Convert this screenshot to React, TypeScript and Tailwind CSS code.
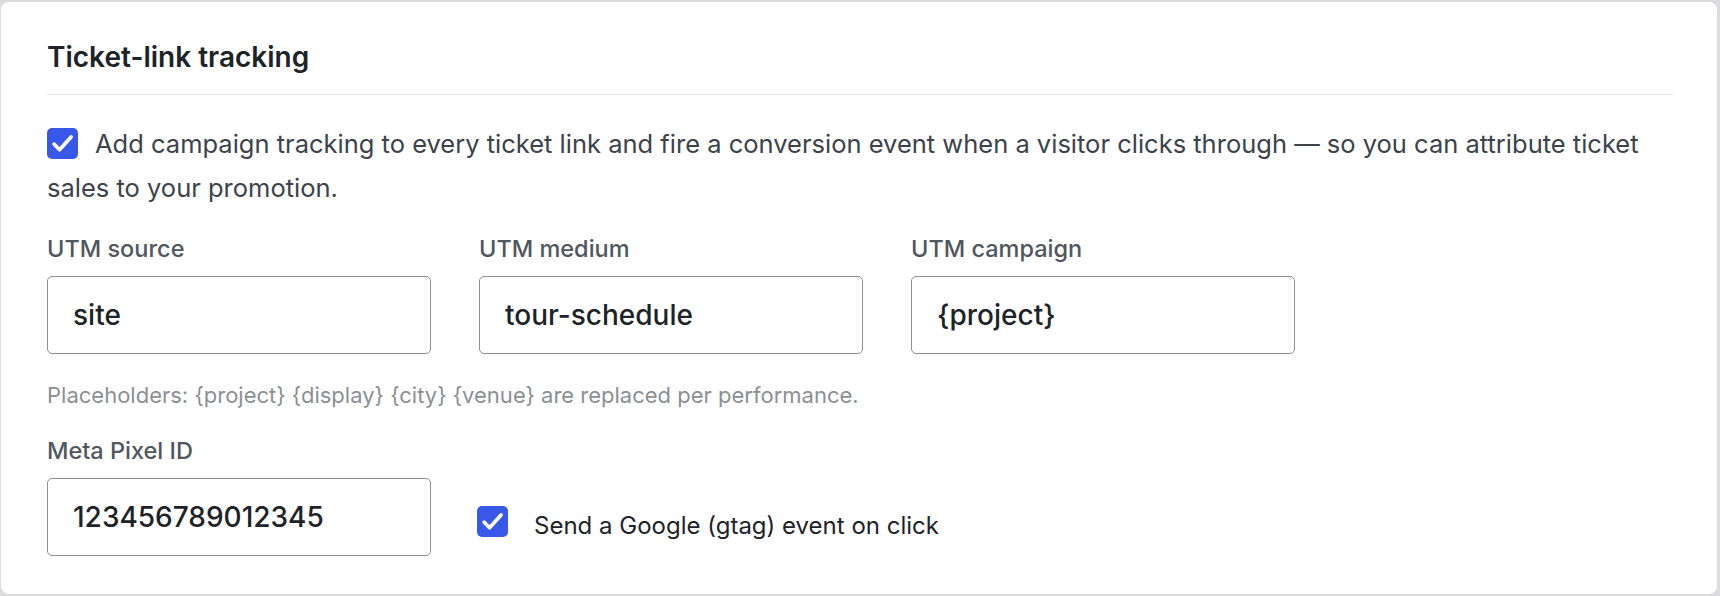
import React from "react"

const font = { fontFamily: "Inter, 'Noto Sans', sans-serif" }

function Check({ className = "" }: { className?: string }) {
  return (
    <span
      className={`inline-flex h-[31px] w-[31px] shrink-0 items-center justify-center rounded-[5px] bg-[#3858e9] align-middle ${className}`}
    >
      <svg width="27" height="27" viewBox="0 0 24 24" fill="none" aria-hidden>
        <path
          d="M4.6 12.6l4.8 4.9L19.6 6.2"
          stroke="white"
          strokeWidth="3.3"
          strokeLinecap="round"
          strokeLinejoin="round"
        />
      </svg>
    </span>
  )
}

function Field({ label, value }: { label: string; value: string }) {
  return (
    <div className="flex w-[384px] flex-col">
      <label className="mb-[13px] text-[23.5px] font-medium leading-[28px] text-[#50575e]">
        {label}
      </label>
      <div className="flex h-[78px] items-center rounded-[5px] border-[1.5px] border-[#8c8f94] bg-white px-[25px] text-[28px] font-medium text-[#1d2327]">
        {value}
      </div>
    </div>
  )
}

export default function App() {
  return (
    <div
      className="h-[596px] w-full bg-[#dcdcde] pb-[2px] pl-[1px] pr-[3px] pt-[2px]"
      style={font}
    >
      <div className="h-[592px] rounded-[8px] bg-white pl-[46px] pr-[44px] pt-[39px]">
        <h2 className="pb-[21px] text-[28px] font-semibold leading-[32px] text-[#1d2327]">
          Ticket-link tracking
        </h2>
        <div className="h-px bg-[#e6e6ea]" />

        <p className="mt-[27px] text-[25.5px] leading-[44px] text-[#3c434a]">
          <Check className="mr-[17px] -mt-[5px]" />
          Add campaign tracking to every ticket link and fire a conversion
          event when a visitor clicks through — so you can attribute ticket
          sales to your promotion.
        </p>

        <div className="mt-[25px] flex gap-[48px]">
          <Field label="UTM source" value="site" />
          <Field label="UTM medium" value="tour-schedule" />
          <Field label="UTM campaign" value="{project}" />
        </div>

        <p className="mt-[28px] text-[22px] leading-[26px] text-[#8c8f94]">
          Placeholders: {"{project}"} {"{display}"} {"{city}"} {"{venue}"} are
          replaced per performance.
        </p>

        <div className="mt-[29px] flex items-end gap-[46px]">
          <Field label="Meta Pixel ID" value="123456789012345" />
          <label className="mb-[14px] flex items-center gap-[26px] text-[24px] leading-[32px] text-[#1d2327]">
            <Check />
            <span className="pt-[10px]">Send a Google (gtag) event on click</span>
          </label>
        </div>
      </div>
    </div>
  )
}
